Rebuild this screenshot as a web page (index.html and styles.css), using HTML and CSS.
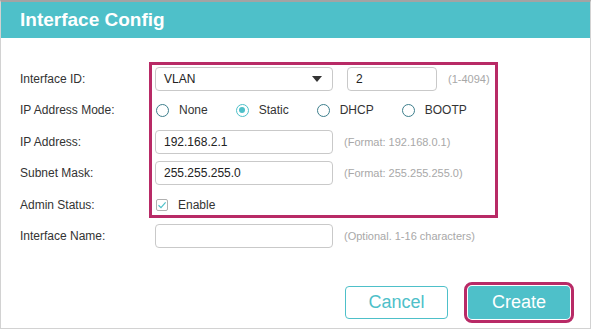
FILE: index.html
```html
<!DOCTYPE html>
<html lang="en">
<head>
  <meta charset="UTF-8" />
  <link rel="stylesheet" href="styles.css">
</head>
<body>

  <div class="dialog">
    <div class="dialog-header">Interface Config</div>

    <div class="dialog-body">
      <form class="config-form">
        <label class="field-label">Interface ID:</label>
        <div class="field">
          <div class="select-box">
            <span>VLAN</span>
            <span class="arrow"></span>
          </div>
          <input class="text-input small" value="2" />
          <span class="hint">(1-4094)</span>
        </div>

        <label class="field-label">IP Address Mode:</label>
        <div class="field radios">
          <span class="radio"><span class="dot"></span>None</span>
          <span class="radio"><span class="dot checked"></span>Static</span>
          <span class="radio"><span class="dot"></span>DHCP</span>
          <span class="radio"><span class="dot"></span>BOOTP</span>
        </div>

        <label class="field-label">IP Address:</label>
        <div class="field">
          <input class="text-input" value="192.168.2.1" />
          <span class="hint">(Format: 192.168.0.1)</span>
        </div>

        <label class="field-label">Subnet Mask:</label>
        <div class="field">
          <input class="text-input" value="255.255.255.0" />
          <span class="hint">(Format: 255.255.255.0)</span>
        </div>

        <label class="field-label">Admin Status:</label>
        <div class="field">
          <span class="checkbox">
            <svg width="10" height="10" viewBox="0 0 10 10"><path d="M1.5 5.2 L4 7.6 L8.6 2.4" fill="none" stroke="#4ec0c9" stroke-width="1.2"/></svg>
          </span>
          <span class="check-text">Enable</span>
        </div>

        <label class="field-label">Interface Name:</label>
        <div class="field">
          <input class="text-input" value="" />
          <span class="hint">(Optional. 1-16 characters)</span>
        </div>
      </form>

      <div class="buttons">
        <button class="btn btn-cancel">Cancel</button>
        <button class="btn btn-create">Create</button>
      </div>
    </div>

    <!-- annotation box over the edited fields -->
    <div class="highlight"></div>
  </div>

</body>
</html>
```

FILE: styles.css
```css
body {
  margin: 0;
  font-family: "Liberation Sans", Arial, sans-serif;
  background: white;
}

.dialog {
  position: relative;
  width: 589px;
  height: 326px;
  border-top: 2px solid #a3a3a3;
  border-left: 1px solid #d2d2d2;
  border-right: 1px solid #d2d2d2;
  border-bottom: 1px solid #d2d2d2;
  background: white;
}

.dialog-header {
  height: 36px;
  line-height: 36px;
  background: #4ec0c9;
  color: white;
  font-size: 19px;
  font-weight: bold;
  padding-left: 19px;
}

.dialog-body {
  padding: 25px 20px 0 19px;
}

.config-form {
  display: grid;
  grid-template-columns: 135px 1fr;
  grid-auto-rows: 31.5px;
  align-items: center;
}

.field-label {
  font-size: 12px;
  color: #333;
}

.field {
  display: flex;
  align-items: center;
}

.select-box {
  box-sizing: border-box;
  width: 178px;
  height: 24px;
  border: 1px solid #c9c9c9;
  border-radius: 4px;
  display: flex;
  align-items: center;
  justify-content: space-between;
  padding: 0 10px 0 8px;
  font-size: 12px;
  color: #222;
}

.select-box .arrow {
  width: 0;
  height: 0;
  border-left: 5px solid transparent;
  border-right: 5px solid transparent;
  border-top: 6px solid #333;
}

.text-input {
  box-sizing: border-box;
  width: 178px;
  height: 24px;
  border: 1px solid #c9c9c9;
  border-radius: 4px;
  padding: 0 8px;
  font-family: "Liberation Sans", Arial, sans-serif;
  font-size: 12px;
  color: #222;
  margin: 0;
}

.text-input.small {
  width: 90px;
  margin-left: 14px;
}

.hint {
  font-size: 11px;
  color: #a8a8a8;
  margin-left: 11px;
}

.radios {
  font-size: 12px;
  color: #333;
}

.radio {
  display: flex;
  align-items: center;
  margin-right: 27px;
}

.radio .dot {
  box-sizing: border-box;
  width: 13px;
  height: 13px;
  border: 1.5px solid #3d7e8c;
  border-radius: 50%;
  margin: 0 10px 0 1px;
  position: relative;
}

.radio .dot.checked {
  border-color: #4ec0c9;
}

.radio .dot.checked::after {
  content: "";
  position: absolute;
  left: 2px;
  top: 2px;
  width: 6px;
  height: 6px;
  border-radius: 50%;
  background: #4ec0c9;
}

.checkbox {
  box-sizing: border-box;
  width: 12px;
  height: 12px;
  border: 1px solid #b0b0b0;
  border-radius: 2px;
  display: flex;
  align-items: center;
  justify-content: center;
  margin-left: 1px;
}

.check-text {
  font-size: 12px;
  color: #333;
  margin-left: 10px;
}

.buttons {
  display: flex;
  justify-content: flex-end;
  gap: 20px;
  margin-top: 34px;
}

.btn {
  box-sizing: border-box;
  width: 103px;
  height: 33px;
  border-radius: 4px;
  font-family: "Liberation Sans", Arial, sans-serif;
  font-size: 18px;
  cursor: pointer;
}

.btn-cancel {
  background: white;
  color: #4ec0c9;
  border: 1.5px solid #4ec0c9;
}

.btn-create {
  background: #4ec0c9;
  color: white;
  border: none;
  width: 102px;
  outline: 3px solid #b82a66;
  outline-offset: 1px;
}

.highlight {
  position: absolute;
  left: 148px;
  top: 60px;
  width: 343px;
  height: 150px;
  border: 3px solid #b82a66;
  pointer-events: none;
}
```
